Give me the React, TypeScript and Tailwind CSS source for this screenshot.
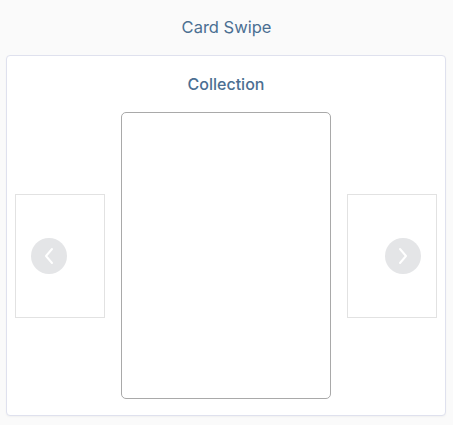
import React from 'react';

function Arrow({ dir }: { dir: 'left' | 'right' }) {
  return (
    <button className="w-9 h-9 rounded-full bg-[#e4e5e7] flex items-center justify-center">
      <svg width="12" height="20" viewBox="0 0 12 20" fill="none" stroke="#ffffff" strokeWidth="2" strokeLinecap="round" strokeLinejoin="round">
        {dir === 'left' ? <polyline points="9,3 3,10 9,17" /> : <polyline points="3,3 9,10 3,17" />}
      </svg>
    </button>
  );
}

export default function App() {
  return (
    <div className="min-h-screen bg-[#fafafa] font-['Inter',sans-serif]">
      <div className="h-[55px] flex items-center justify-center">
        <h1 className="text-[16.5px] text-[#4b6f92]">Card Swipe</h1>
      </div>
      <div className="ml-[6px] mr-[7px] bg-white border border-[#dfe1ee] rounded-[4px] shadow-[0_1px_2px_rgba(0,0,0,0.04)] px-[8px] pt-[16px] pb-[16px]">
        <h2 className="text-center text-[16px] leading-6 font-medium text-[#4b6f92] mb-[16px]">Collection</h2>
        <div className="relative flex items-center justify-center gap-4">
          <div className="w-[90px] h-[124px] border border-[#e2e2e2] bg-white" />
          <div className="w-[210px] h-[287px] border border-[#a9a9a9] rounded-[5px] bg-white" />
          <div className="w-[90px] h-[124px] border border-[#e2e2e2] bg-white" />
          <div className="absolute left-[16px] top-1/2 -translate-y-1/2">
            <Arrow dir="left" />
          </div>
          <div className="absolute right-[16px] top-1/2 -translate-y-1/2">
            <Arrow dir="right" />
          </div>
        </div>
      </div>
    </div>
  );
}
